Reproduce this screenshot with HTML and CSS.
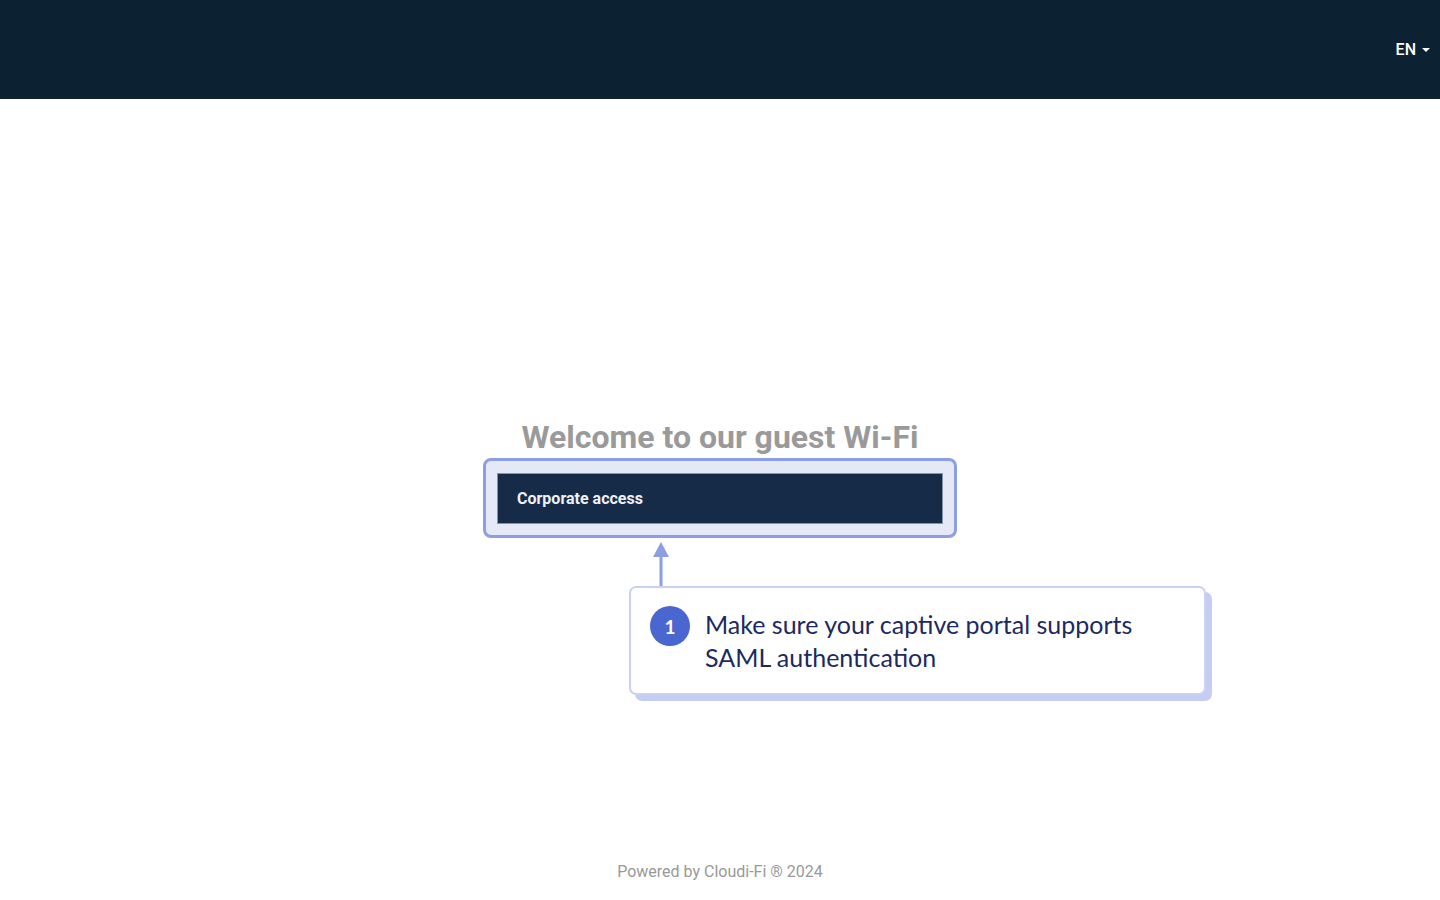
FILE: index.html
```html
<!DOCTYPE html>
<html lang="en">
<head>
    <meta charset="UTF-8">
    <meta name="viewport" content="width=device-width, initial-scale=1.0">
    <title>Guest Wi-Fi</title>
    <link rel="stylesheet" href="styles.css">
</head>
<body>
    <header class="topbar">
        <div class="lang">EN <span class="caret"></span></div>
    </header>
    <main class="content">
        <h1 class="title">Welcome to our guest Wi-Fi</h1>
        <div class="login-wrap">
            <div class="highlight">
                <button class="login-btn" type="button">Corporate access</button>
            </div>
            <div class="arrow">
                <svg width="16" height="45" viewBox="0 0 16 45">
                    <polygon points="8,0 16,15 0,15" fill="#8d9fe3"/>
                    <rect x="6.5" y="13" width="3" height="32" fill="#8d9fe3"/>
                </svg>
            </div>
            <div class="callout">
                <span class="step">1</span>
                <p>Make sure your captive portal supports SAML authentication</p>
            </div>
        </div>
    </main>
    <footer class="footer">Powered by Cloudi-Fi &reg; 2024</footer>
</body>
</html>
```

FILE: styles.css
```css
body {
    margin: 0;
    font-family: Roboto, Arial, sans-serif;
    background: #fff;
    min-height: 900px;
    display: flex;
    flex-direction: column;
}
.topbar {
    height: 99px;
    background-color: #0c2233;
    display: flex;
    justify-content: flex-end;
    align-items: center;
    padding-right: 10px;
}
.lang {
    color: #fff;
    font-size: 16px;
    font-weight: 500;
    display: flex;
    align-items: center;
    gap: 4px;
}
.caret {
    width: 0;
    height: 0;
    border-left: 4px solid transparent;
    border-right: 4px solid transparent;
    border-top: 4px solid #fff;
    margin-left: 2px;
}
.content {
    flex: 1;
    display: flex;
    flex-direction: column;
    align-items: center;
    padding-top: 318px;
}
.title {
    margin: 0;
    font-size: 32px;
    font-weight: 700;
    color: #9a9a9a;
    line-height: 40px;
}
.login-wrap {
    position: relative;
    margin-top: 1px;
}
.highlight {
    width: 446px;
    padding: 12px 11px 11px;
    border: 3px solid #8d9fe3;
    border-radius: 8px;
    background: #e4e8f7;
}
.login-btn {
    display: block;
    width: 100%;
    height: 51px;
    background: #162b47;
    border: 1px solid #8494ad;
    color: #eef1f7;
    font-family: Roboto, Arial, sans-serif;
    font-size: 16px;
    font-weight: 700;
    text-align: left;
    padding: 0 19px;
}
.arrow {
    position: absolute;
    left: 170px;
    top: 84px;
    line-height: 0;
}
.callout {
    position: absolute;
    left: 146px;
    top: 128px;
    width: 534px;
    height: 71px;
    padding: 18px 20px 16px 19px;
    border: 2px solid #c9d2f3;
    border-radius: 7px;
    background: #fff;
    box-shadow: 6px 6px 0 #c5cef2;
    display: flex;
    align-items: flex-start;
    gap: 15px;
}
.step {
    flex: none;
    width: 40px;
    height: 40px;
    border-radius: 50%;
    background: #4a66d0;
    color: #fff;
    font-family: Lato, "Open Sans", sans-serif;
    font-weight: 700;
    font-size: 19px;
    display: flex;
    align-items: center;
    justify-content: center;
}
.callout p {
    margin: 0;
    max-width: 440px;
    font-family: Lato, "Open Sans", sans-serif;
    font-size: 25px;
    line-height: 33px;
    color: #1c2a5f;
    margin-top: 2px;
}
.footer {
    text-align: center;
    color: #999;
    font-size: 16px;
    padding-bottom: 19px;
}
```
